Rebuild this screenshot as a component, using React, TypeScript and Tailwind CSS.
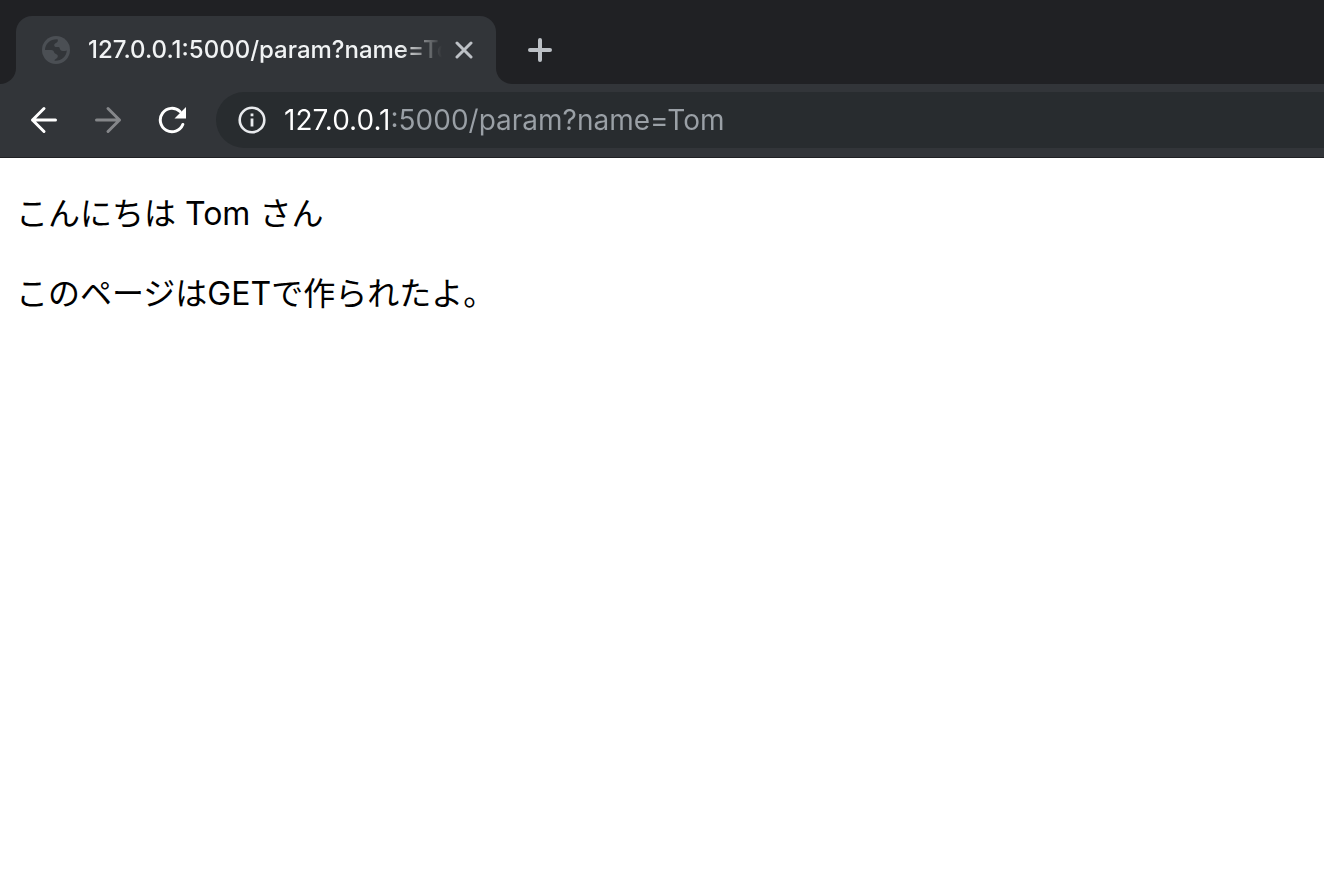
import React from 'react';

interface IconProps {
  className?: string;
}

const GlobeIcon: React.FC<IconProps> = ({ className }) => (
  <svg viewBox="0 0 28 28" className={className} aria-hidden="true">
    <circle cx="14" cy="14" r="14" fill="#4b4f54" />
    <path
      d="M3 14C3 8 8 3 15.500 3.200C16.500 4.800 15.500 6.500 13.500 7.200C11.500 8 12 11 14 11H16.500C18 11 17.500 13 18.500 14C19.500 15.200 22 15.500 24.800 14.500C24.500 20.500 19.500 25.200 12.500 24.800C12.500 22.800 15.800 22.800 15.800 20C15.800 17.800 12.500 18.500 12 16C11.500 14 9.500 14 8 14Z"
      fill="#323539"
    />
  </svg>
);

const ArrowIcon: React.FC<IconProps> = ({ className }) => (
  <svg viewBox="0 0 28 28" className={className} fill="none" stroke="currentColor" strokeWidth="3" strokeLinecap="round" strokeLinejoin="round" aria-hidden="true">
    <path d="M25.500 14H2.500M14 2.500L2.500 14L14 25.500" />
  </svg>
);

const ReloadIcon: React.FC<IconProps> = ({ className }) => (
  <svg viewBox="0 0 28 28" className={className} aria-hidden="true">
    <path d="M24.800 18.500A11.700 11.700 0 1 1 22 5.500" fill="none" stroke="currentColor" strokeWidth="3" strokeLinecap="round" />
    <path d="M28 1v11.500h-11.500z" fill="currentColor" />
  </svg>
);

const InfoIcon: React.FC<IconProps> = ({ className }) => (
  <svg viewBox="0 0 28 28" className={className} aria-hidden="true">
    <circle cx="14" cy="14" r="12.300" fill="none" stroke="currentColor" strokeWidth="2.600" />
    <path d="M12.600 7.400h2.800v2.800h-2.800zM12.600 12.400h2.800v8.200h-2.800z" fill="currentColor" />
  </svg>
);

const TabStrip: React.FC = () => (
  <div className="flex items-end bg-[#202124] pt-4">
    <div className="w-4 h-4 bg-[#323539]">
      <div className="w-4 h-4 rounded-br-2xl bg-[#202124]" />
    </div>
    <div className="w-[480px] h-[68px] flex items-center rounded-t-2xl bg-[#323539] pl-[26px] pr-5">
      <GlobeIcon className="w-7 h-7 shrink-0" />
      <span className="flex-1 ml-[18px] overflow-hidden whitespace-nowrap text-2xl font-medium text-[#f1f3f4] mask-r-from-[312px] mask-r-to-[354px]">
        127.0.0.1:5000/param?name=Tom
      </span>
      <button aria-label="Close tab" className="w-6 h-6 shrink-0 flex items-center justify-center text-[#bdc1c6]">
        <svg viewBox="0 0 18 18" className="w-[18px] h-[18px]" fill="none" stroke="currentColor" strokeWidth="3" strokeLinecap="round" aria-hidden="true">
          <path d="M2 2l14 14M16 2L2 16" />
        </svg>
      </button>
    </div>
    <div className="w-4 h-4 bg-[#323539]">
      <div className="w-4 h-4 rounded-bl-2xl bg-[#202124]" />
    </div>
    <button aria-label="New tab" className="h-[68px] w-14 flex items-center justify-center text-[#bdc1c6]">
      <svg viewBox="0 0 24 24" className="w-6 h-6" fill="none" stroke="currentColor" strokeWidth="4" strokeLinecap="round" aria-hidden="true">
        <path d="M12 2v20M2 12h20" />
      </svg>
    </button>
  </div>
);

const Toolbar: React.FC = () => (
  <div className="flex items-center bg-[#323539] border-b border-[#202124] pt-2 pb-[9px] pl-[30px]">
    <div className="flex gap-9 text-white">
      <button aria-label="Back">
        <ArrowIcon className="w-7 h-7" />
      </button>
      <button aria-label="Forward" className="text-[#85878a]">
        <ArrowIcon className="w-7 h-7 rotate-180" />
      </button>
      <button aria-label="Reload">
        <ReloadIcon className="w-7 h-7" />
      </button>
    </div>
    <div className="flex-1 h-14 ml-[30px] flex items-center rounded-l-full bg-[#282c2f] pl-[22px]">
      <button aria-label="View site information" className="text-[#e8eaed]">
        <InfoIcon className="w-7 h-7" />
      </button>
      {/* host part is white, the rest of the address is dimmed */}
      <input
        type="text"
        aria-label="Address"
        defaultValue="127.0.0.1:5000/param?name=Tom"
        className="flex-1 min-w-0 ml-[18px] text-[28px] leading-10 text-transparent caret-white outline-none bg-clip-text bg-linear-to-r from-white from-[106px] to-[#9aa0a6] to-[106px]"
      />
    </div>
  </div>
);

const App: React.FC = () => {
  return (
    <div className="min-h-screen bg-white font-['Inter',sans-serif]">
      <header>
        <TabStrip />
        <Toolbar />
      </header>
      <main lang="ja" className="px-4 py-8 space-y-8 text-[32px] leading-[48px] text-black font-['Inter','Noto_Sans_CJK_JP',sans-serif]">
        <p>こんにちは Tom さん</p>
        <p>このページはGETで作られたよ。</p>
      </main>
    </div>
  );
};

export default App;
